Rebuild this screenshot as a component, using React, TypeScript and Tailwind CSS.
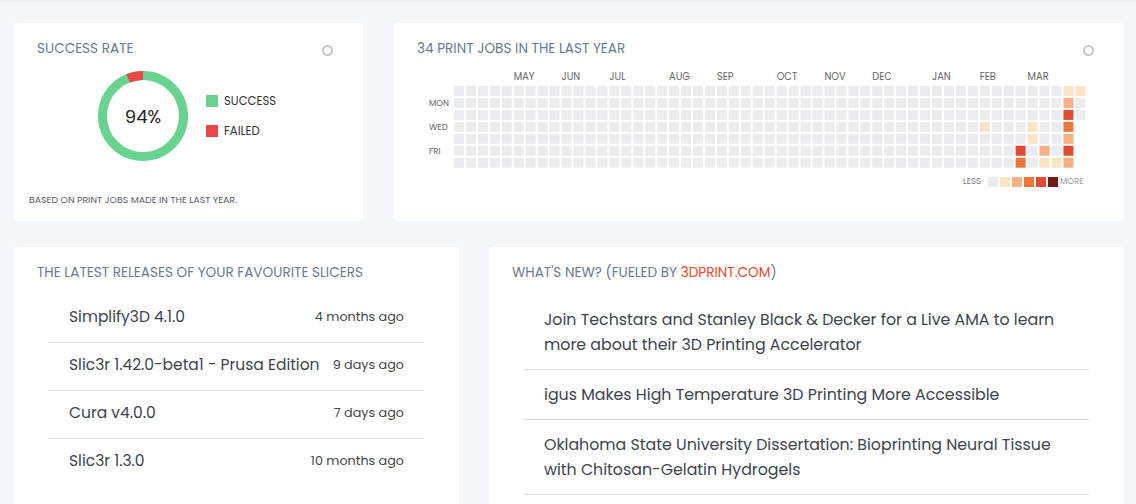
import React from 'react';

const font = "font-['Poppins','Open_Sans','Noto_Sans',sans-serif]";

const LEVELS = ['#ebecf0', '#fbe3c6', '#f5b183', '#e9783a', '#e24b33', '#6f1c15'];

// col -> row -> level (everything else is empty)
const ACTIVITY: Record<number, Record<number, number>> = {
    44: { 3: 1 },
    47: { 5: 4, 6: 3 },
    48: { 3: 1, 4: 1 },
    49: { 5: 2, 6: 1 },
    50: { 6: 1 },
    51: { 0: 1, 1: 2, 2: 4, 3: 3, 4: 2, 5: 4, 6: 2 },
    52: { 0: 1 },
};

const MONTHS: [string, number][] = [
    ['MAY', 5], ['JUN', 9], ['JUL', 13], ['AUG', 18], ['SEP', 22], ['OCT', 27],
    ['NOV', 31], ['DEC', 35], ['JAN', 40], ['FEB', 44], ['MAR', 48],
];

const RELEASES = [
    { name: 'Simplify3D 4.1.0', date: '4 months ago' },
    { name: 'Slic3r 1.42.0-beta1 - Prusa Edition', date: '9 days ago' },
    { name: 'Cura v4.0.0', date: '7 days ago' },
    { name: 'Slic3r 1.3.0', date: '10 months ago' },
];

const NEWS = [
    'Join Techstars and Stanley Black & Decker for a Live AMA to learn more about their 3D Printing Accelerator',
    'igus Makes High Temperature 3D Printing More Accessible',
    'Oklahoma State University Dissertation: Bioprinting Neural Tissue with Chitosan-Gelatin Hydrogels',
];

const Dot: React.FC<{ className?: string }> = ({ className = '' }) => (
    <span className={`mt-[3px] block h-[11px] w-[11px] rounded-full border-2 border-[#c4c4c4] ${className}`} />
);

const CardTitle: React.FC<{ children: React.ReactNode }> = ({ children }) => (
    <h2 className="text-[13.6px] leading-[14px] uppercase text-[#6a7a90]">{children}</h2>
);

const Donut = () => {
    const r = 40.5;
    const c = 2 * Math.PI * r;
    const failed = 0.06 * c;
    return (
        <div className="relative h-[90px] w-[90px] shrink-0">
            <svg width="90" height="90" viewBox="0 0 90 90">
                <circle cx="45" cy="45" r={r} fill="none" stroke="#68d391" strokeWidth="9" />
                <circle
                    cx="45" cy="45" r={r} fill="none" stroke="#e94848" strokeWidth="9"
                    strokeDasharray={`${failed} ${c}`}
                    transform="rotate(-111.6 45 45)"
                />
            </svg>
            <div className="absolute inset-0 flex items-center justify-center text-[18px] text-[#222]">94%</div>
        </div>
    );
};

const Heatmap = () => {
    const pitch = 11.95;
    const x0 = 37;
    const y0 = 21;
    const cells: React.ReactNode[] = [];
    for (let col = 0; col < 53; col++) {
        const rows = col === 52 ? 3 : 7;
        for (let row = 0; row < rows; row++) {
            const lvl = ACTIVITY[col]?.[row] ?? 0;
            cells.push(
                <rect key={`${col}-${row}`} x={x0 + col * pitch} y={y0 + row * pitch} width="10" height="10" fill={LEVELS[lvl]} />
            );
        }
    }
    return (
        <svg width="680" height="126" className="mt-[9px] block" style={{ fontFamily: 'Poppins, "Open Sans", sans-serif' }}>
            {MONTHS.map(([m, col]) => (
                <text key={m} x={x0 + col * pitch} y="12" fontSize="9.8" fill="#666" dominantBaseline="middle">{m}</text>
            ))}
            {[['MON', 1], ['WED', 3], ['FRI', 5]].map(([d, row]) => (
                <text key={d as string} x="12" y={y0 + (row as number) * pitch + 5.5} fontSize="8.5" fill="#666" dominantBaseline="middle">{d}</text>
            ))}
            {cells}
            <text x="546" y="117" fontSize="8.5" fill="#777" dominantBaseline="middle">LESS</text>
            {LEVELS.map((c, i) => (
                <rect key={c} x={571 + i * 12} y="112" width="10" height="10" fill={c} />
            ))}
            <text x="643" y="117" fontSize="8.5" fill="#999" dominantBaseline="middle">MORE</text>
        </svg>
    );
};

export default function App() {
    return (
        <div className={`${font} min-h-[504px] bg-[#f3f7fa] pl-[14px] pr-[12px] pt-[23px] shadow-[inset_0_3px_3px_-2px_rgba(0,0,0,0.06)]`}>
            <div className="grid grid-cols-[349px_1fr] gap-x-[31px]">
                {/* Success rate */}
                <div className="flex h-[198px] flex-col rounded-[4px] bg-white pt-[19px]">
                    <div className="flex justify-between px-[23px]">
                        <CardTitle>Success rate</CardTitle>
                        <Dot className="mr-[7px]" />
                    </div>
                    <div className="mt-[15px] flex items-center gap-[18px] pl-[84px]">
                        <Donut />
                        <div className="flex flex-col gap-[18px] text-[11.6px] leading-[12px] text-[#333]">
                            <div className="flex items-center gap-[6px]">
                                <span className="h-[12px] w-[12px] bg-[#68d391]" />SUCCESS
                            </div>
                            <div className="flex items-center gap-[6px]">
                                <span className="h-[12px] w-[12px] bg-[#e94848]" />FAILED
                            </div>
                        </div>
                    </div>
                    <p className="mt-auto mb-[16px] pl-[15px] text-[9.4px] leading-[10px] text-[#555c66]">
                        BASED ON PRINT JOBS MADE IN THE LAST YEAR.
                    </p>
                </div>

                {/* Heatmap */}
                <div className="h-[198px] rounded-[4px] bg-white pt-[19px] px-[23px]">
                    <div className="flex justify-between">
                        <CardTitle>34 print jobs in the last year</CardTitle>
                        <Dot className="mr-[7px]" />
                    </div>
                    <Heatmap />
                </div>
            </div>

            <div className="mt-[26px] grid grid-cols-[445px_1fr] gap-x-[30px]">
                {/* Slicer releases */}
                <div className="rounded-t-[4px] bg-white pt-[19px] px-[23px] pb-[20px]">
                    <CardTitle>The latest releases of your favourite slicers</CardTitle>
                    <ul className="mx-[12px] mt-[15px]">
                        {RELEASES.map((r, i) => (
                            <li
                                key={r.name}
                                className={`flex items-center justify-between px-[20px] pt-[10px] pb-[13px] ${i < RELEASES.length - 1 ? 'border-b border-[#dedede]' : ''}`}
                            >
                                <span className="text-[15.5px] leading-[24px] text-[#3c4450]">{r.name}</span>
                                <span className="text-[12.75px] leading-[24px] text-[#444]">{r.date}</span>
                            </li>
                        ))}
                    </ul>
                </div>

                {/* News */}
                <div className="rounded-t-[4px] bg-white pt-[19px] px-[23px] pb-[20px]">
                    <CardTitle>
                        What's new? (fueled by <span className="text-[#f0462a]">3dprint.com</span>)
                    </CardTitle>
                    <ul className="mx-[12px] mt-[15px]">
                        {NEWS.map((n) => (
                            <li key={n} className="border-b border-[#dedede] px-[20px] py-[12px] text-[15.8px] leading-[25px] text-[#3c4450]">
                                {n}
                            </li>
                        ))}
                    </ul>
                </div>
            </div>
        </div>
    );
}
